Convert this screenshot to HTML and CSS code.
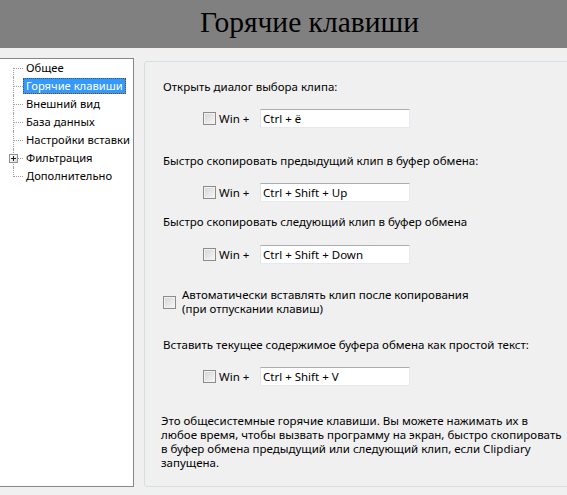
FILE: index.html
```html
<!DOCTYPE html>
<html lang="ru">
<head>
<meta charset="utf-8">
<title>Горячие клавиши</title>
<link rel="stylesheet" href="styles.css">
</head>
<body>
<header class="title-bar"><h1 class="title">Горячие клавиши</h1></header>
<main class="layout">
  <nav class="tree">
    <ul class="tree-list">
      <li class="tree-row tree-row-first"><span class="twig"></span><span class="tree-label">Общее</span></li>
      <li class="tree-row"><span class="twig"></span><span class="tree-label tree-label-selected">Горячие клавиши</span></li>
      <li class="tree-row"><span class="twig"></span><span class="tree-label">Внешний вид</span></li>
      <li class="tree-row"><span class="twig"></span><span class="tree-label">База данных</span></li>
      <li class="tree-row"><span class="twig"></span><span class="tree-label">Настройки вставки</span></li>
      <li class="tree-row"><span class="twig"><span class="expander"></span></span><span class="tree-label">Фильтрация</span></li>
      <li class="tree-row tree-row-last"><span class="twig"></span><span class="tree-label">Дополнительно</span></li>
    </ul>
  </nav>
  <section class="group">
    <p class="caption caption-1">Открыть диалог выбора клипа:</p>
    <div class="hotkey-row hotkey-row-1">
      <input type="checkbox" class="check"><span class="win">Win +</span><input class="hotkey" type="text" value="Ctrl + ё" readonly>
    </div>
    <p class="caption caption-2">Быстро скопировать предыдущий клип в буфер обмена:</p>
    <div class="hotkey-row hotkey-row-2">
      <input type="checkbox" class="check"><span class="win">Win +</span><input class="hotkey" type="text" value="Ctrl + Shift + Up" readonly>
    </div>
    <p class="caption caption-3">Быстро скопировать следующий клип в буфер обмена</p>
    <div class="hotkey-row hotkey-row-3">
      <input type="checkbox" class="check"><span class="win">Win +</span><input class="hotkey" type="text" value="Ctrl + Shift + Down" readonly>
    </div>
    <label class="auto-paste">
      <input type="checkbox" class="check"><span class="auto-text">Автоматически вставлять клип после копирования<br>(при отпускании клавиш)</span>
    </label>
    <p class="caption caption-4">Вставить текущее содержимое буфера обмена как простой текст:</p>
    <div class="hotkey-row hotkey-row-4">
      <input type="checkbox" class="check"><span class="win">Win +</span><input class="hotkey" type="text" value="Ctrl + Shift + V" readonly>
    </div>
    <p class="note">Это общесистемные горячие клавиши. Вы можете нажимать их в<br>любое время, чтобы вызвать программу на экран, быстро скопировать<br>в буфер обмена предыдущий или следующий клип, если Clipdiary<br>запущена.</p>
  </section>
</main>
</body>
</html>
```

FILE: styles.css
```css
html, body {
  margin: 0;
  padding: 0;
}
body {
  width: 567px;
  height: 495px;
  overflow: hidden;
  background: #f0f0f0;
  font-family: "Noto Sans", "Open Sans", sans-serif;
  font-size: 11.5px;
  color: #000;
}
.title-bar {
  height: 48px;
  background: #808080;
  box-sizing: border-box;
  padding-left: 52px;
  padding-bottom: 4px;
}
.title {
  margin: 0;
  text-align: center;
  font-family: "Liberation Serif", "Times New Roman", serif;
  font-weight: normal;
  font-size: 29.5px;
  line-height: 44px;
  color: #000;
}
.layout {
  display: flex;
  align-items: flex-start;
  margin-top: 10px;
}
.tree {
  flex: 0 0 auto;
  width: 135px;
  height: 429px;
  box-sizing: border-box;
  margin-left: -1px;
  background: #fff;
  border: 1px solid #828790;
  font-size: 11.2px;
}
.tree-list {
  list-style: none;
  margin: 0;
  padding: 0;
}
.tree-row {
  display: flex;
  align-items: center;
  height: 18px;
}
.twig {
  position: relative;
  align-self: stretch;
  width: 10px;
  margin-left: 13px;
  flex: 0 0 auto;
}
.twig::before {
  content: "";
  position: absolute;
  left: 0;
  top: 0;
  bottom: 0;
  border-left: 1px dotted #a0a0a0;
}
.twig::after {
  content: "";
  position: absolute;
  left: 1px;
  right: 0;
  top: 9px;
  border-top: 1px dotted #a0a0a0;
}
.tree-row-first .twig::before { top: 9px; }
.tree-row-last .twig::before { bottom: 8px; }
.expander {
  position: absolute;
  left: -4px;
  top: 5px;
  width: 9px;
  height: 9px;
  box-sizing: border-box;
  border: 1px solid #919191;
  background: linear-gradient(135deg, #ffffff, #dedede);
  z-index: 1;
}
.expander::before {
  content: "";
  position: absolute;
  left: 1px;
  top: 3px;
  width: 5px;
  height: 1px;
  background: #1f1f1f;
}
.expander::after {
  content: "";
  position: absolute;
  left: 3px;
  top: 1px;
  width: 1px;
  height: 5px;
  background: #1f1f1f;
}
.tree-label {
  display: inline-block;
  height: 16px;
  line-height: 14px;
  padding: 0 2px 0 2px;
  border: 1px solid transparent;
  box-sizing: border-box;
  white-space: nowrap;
}
.tree-label-selected {
  background: #3399ff;
  color: #fff;
  border: 1px dotted #6b4a1c;
}
.group {
  flex: 0 0 auto;
  width: 440px;
  height: 426px;
  box-sizing: border-box;
  margin-left: 10px;
  margin-top: 3px;
  border: 1px solid #d5dfe5;
  border-radius: 3px;
  padding: 17px 0 0 18px;
}
.caption {
  margin: 0;
  line-height: 15px;
  white-space: nowrap;
}
.caption-2 { margin-top: 25px; }
.caption-3 { margin-top: 12px; }
.caption-4 { margin-top: 21px; }
.hotkey-row {
  display: flex;
  align-items: center;
  height: 19px;
  margin-top: 15px;
  padding-left: 40px;
}
.hotkey-row-2 { margin-top: 15px; }
.hotkey-row-3 { margin-top: 16px; }
.check {
  appearance: none;
  -webkit-appearance: none;
  margin: 0;
  width: 13px;
  height: 13px;
  box-sizing: border-box;
  border: 1px solid #8a8b8b;
  background: linear-gradient(135deg, #d3d3d3, #f8f8f8);
  box-shadow: inset 0 0 0 1px #f2f2f2;
  flex: 0 0 auto;
}
.win {
  margin-left: 3px;
  width: 41px;
}
.hotkey {
  width: 150px;
  height: 19px;
  box-sizing: border-box;
  margin: 0;
  padding: 0 2px;
  border: 1px solid #e3e9ef;
  border-top-color: #abadb3;
  border-left-color: #e2e3ea;
  background: #fff;
  font: inherit;
  color: #000;
  outline: none;
}
.auto-paste {
  display: flex;
  align-items: center;
  margin-top: 24px;
}
.auto-text {
  margin-left: 6px;
  line-height: 14px;
}
.note {
  margin: 28px 0 0 -2px;
  line-height: 14px;
  white-space: nowrap;
}
```
